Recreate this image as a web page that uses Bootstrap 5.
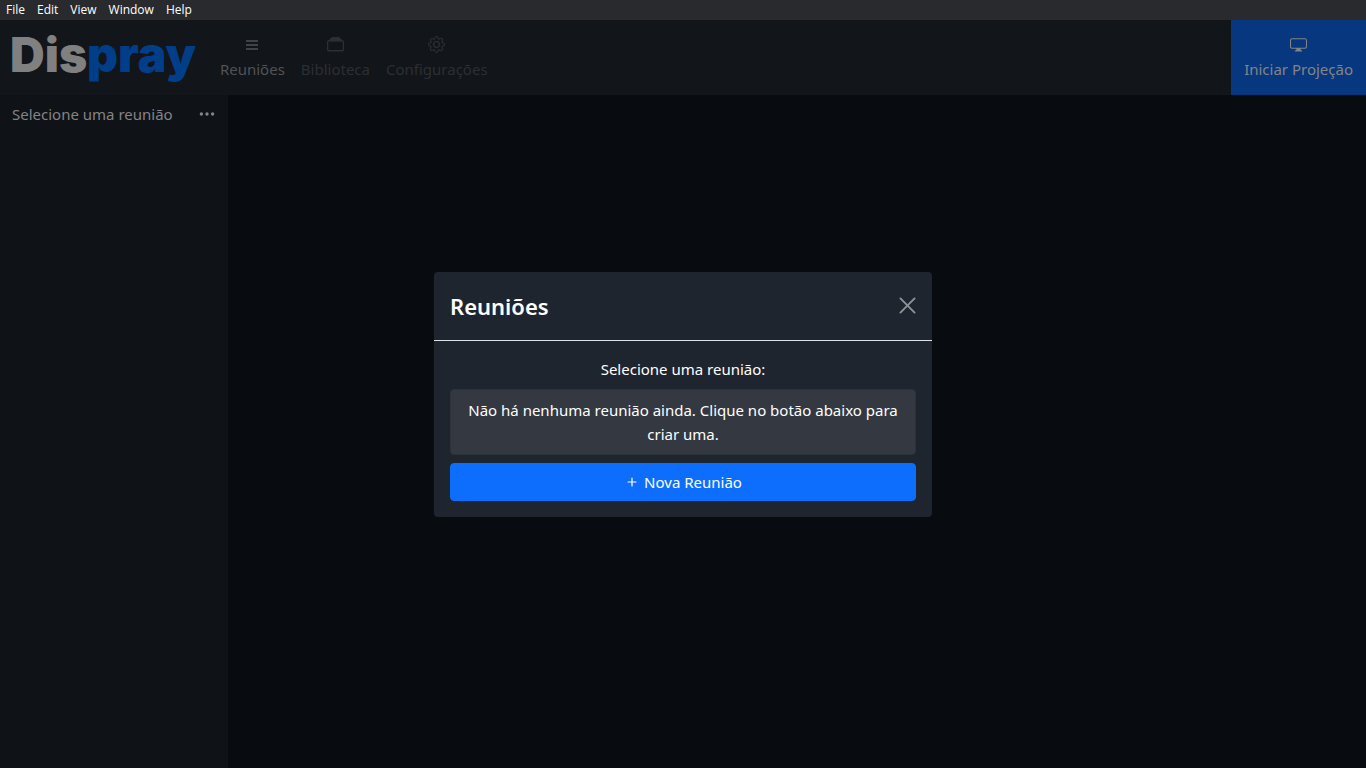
<!DOCTYPE html>
<html lang="pt-BR" data-bs-theme="dark">
<head>
<meta charset="utf-8">
<meta name="viewport" content="width=device-width, initial-scale=1">
<title>Dispray</title>
<link href="https://cdn.jsdelivr.net/npm/bootstrap@5.3.0/dist/css/bootstrap.min.css" rel="stylesheet">
<style>
  body { font-family: "Noto Sans", "Open Sans", sans-serif; font-size: 15px; line-height: 24px; background: #080b10; color: #fff; }
  .btn { font-size: 15px; line-height: 24px; }
  .menu-bar { height: 20px; background: #292a2d; font-family: "Open Sans", sans-serif; font-size: 12px; line-height: 20px; }
  .menu-bar a { color: #fff; padding: 0 6px; }
  .top-bar { height: 75px; background: #121519; }
  .brand { font-family: Inter, sans-serif; font-weight: 900; font-size: 48px; line-height: 70px; color: #808080; margin: 0 16px 0 10px; }
  .brand span { color: #003e89; }
  .nav-item-link { color: #2c2f33; padding: 0 8px; }
  .nav-item-link.active { color: #505356; }
  .top-bar nav { padding-bottom: 2px; }
  .icon-row { display: flex; height: 24px; align-items: center; justify-content: center; }
  .start-btn { background: #07377f; color: #838486; padding: 0 13px 2px; border: 0; }
  .side-panel { background: #0f1216; color: #838486; }
  .side-head { padding: 7px 12px; }
  .dots-btn { color: #838486; border: 0; line-height: 0; }
  .dialog-box { background: #1f252e; background-clip: padding-box; border: 1px solid transparent; border-radius: 5px; }
  .dialog-head { border-bottom: 1px solid #dee2e6; padding: 16px; }
  .dialog-title { font-size: 22px; font-weight: 600; line-height: 36px; }
  .empty-note { background: #333841; border: 1px solid #2d323a; border-radius: 4px; padding: 8px 16px; }
  .new-btn { background: #0d6efd; border-color: #0d6efd; color: #fff; border-radius: 4px; }
  .close-btn { color: #8f9297; border: 0; line-height: 0; }
</style>
</head>
<body class="d-flex flex-column vh-100 overflow-hidden">
<nav class="menu-bar d-flex flex-shrink-0" aria-label="Menu">
  <a class="text-decoration-none" href="#">File</a>
  <a class="text-decoration-none" href="#">Edit</a>
  <a class="text-decoration-none" href="#">View</a>
  <a class="text-decoration-none" href="#">Window</a>
  <a class="text-decoration-none" href="#">Help</a>
</nav>
<div class="position-relative flex-grow-1 d-flex flex-column">
  <header class="top-bar d-flex align-items-stretch">
    <a class="brand text-decoration-none" href="#">Dis<span>pray</span></a>
    <nav class="d-flex align-items-center me-auto text-center">
      <a class="nav-item-link active text-decoration-none" href="#">
        <span class="icon-row"><svg width="16" height="16" viewBox="0 0 16 16" fill="none" stroke="currentColor" stroke-width="1.6"><path d="M2 4h12M2 8h12M2 12h12"/></svg></span>
        Reuniões
      </a>
      <a class="nav-item-link text-decoration-none" href="#">
        <span class="icon-row"><svg width="17" height="17" viewBox="0 0 16 16" fill="currentColor"><path d="M3 2.600a.5.5 0 0 1 .4-.5L5 1h6l1.600 1.100L15.500 5H.5z"/><path d="M0 13a1.500 1.500 0 0 0 1.500 1.500h13A1.500 1.500 0 0 0 16 13V5.500A1.500 1.500 0 0 0 14.500 4h-13A1.500 1.500 0 0 0 0 5.500zm1.700.2A.5.5 0 0 1 1.200 12.700V5.700a.5.5 0 0 1 .5-.5h12.600a.5.5 0 0 1 .5.5v7a.5.5 0 0 1-.5.5z"/></svg></span>
        Biblioteca
      </a>
      <a class="nav-item-link text-decoration-none" href="#">
        <span class="icon-row"><svg width="17" height="17" viewBox="0 0 16 16" fill="currentColor" stroke="currentColor" stroke-width=".2"><path d="M8 4.754a3.246 3.246 0 1 0 0 6.492 3.246 3.246 0 0 0 0-6.492zM5.754 8a2.246 2.246 0 1 1 4.492 0 2.246 2.246 0 0 1-4.492 0z"/><path d="M9.796 1.343c-.527-1.790-3.065-1.790-3.592 0l-.094.319a.873.873 0 0 1-1.255.52l-.292-.160c-1.640-.892-3.433.902-2.540 2.541l.159.292a.873.873 0 0 1-.52 1.255l-.319.094c-1.790.527-1.790 3.065 0 3.592l.319.094a.873.873 0 0 1 .52 1.255l-.160.292c-.892 1.640.901 3.434 2.541 2.540l.292-.159a.873.873 0 0 1 1.255.52l.094.319c.527 1.790 3.065 1.790 3.592 0l.094-.319a.873.873 0 0 1 1.255-.52l.292.160c1.640.893 3.434-.902 2.540-2.541l-.159-.292a.873.873 0 0 1 .52-1.255l.319-.094c1.790-.527 1.790-3.065 0-3.592l-.319-.094a.873.873 0 0 1-.52-1.255l.160-.292c.893-1.640-.902-3.433-2.541-2.540l-.292.159a.873.873 0 0 1-1.255-.52l-.094-.319zm-2.633.283c.246-.835 1.428-.835 1.674 0l.094.319a1.873 1.873 0 0 0 2.693 1.115l.291-.160c.764-.415 1.600.420 1.184 1.185l-.159.292a1.873 1.873 0 0 0 1.116 2.692l.318.094c.835.246.835 1.428 0 1.674l-.319.094a1.873 1.873 0 0 0-1.115 2.693l.160.291c.415.764-.420 1.600-1.185 1.184l-.291-.159a1.873 1.873 0 0 0-2.693 1.116l-.094.318c-.246.835-1.428.835-1.674 0l-.094-.319a1.873 1.873 0 0 0-2.692-1.115l-.292.160c-.764.415-1.600-.420-1.184-1.185l.159-.291A1.873 1.873 0 0 0 1.945 8.930l-.319-.094c-.835-.246-.835-1.428 0-1.674l.319-.094A1.873 1.873 0 0 0 3.060 4.377l-.160-.292c-.415-.764.420-1.600 1.185-1.184l.292.159a1.873 1.873 0 0 0 2.692-1.115l.094-.319z"/></svg></span>
        Configurações
      </a>
    </nav>
    <button type="button" class="btn start-btn rounded-0">
      <span class="icon-row"><svg width="17" height="17" viewBox="0 0 16 16" fill="currentColor"><path d="M0 4s0-2 2-2h12s2 0 2 2v6s0 2-2 2h-4c0 .667.083 1.167.25 1.500H11a.5.5 0 0 1 0 1H5a.5.5 0 0 1 0-1h.75c.167-.333.25-.833.25-1.500H2s-2 0-2-2V4zm1.398-.855a.758.758 0 0 0-.254.302A1.460 1.460 0 0 0 1 4.010V10c0 .325.078.502.145.602.070.105.170.188.302.254a1.464 1.464 0 0 0 .538.143L2.010 11H14c.325 0 .502-.078.602-.145a.758.758 0 0 0 .254-.302 1.464 1.464 0 0 0 .143-.538L15 9.990V4c0-.325-.078-.502-.145-.602a.757.757 0 0 0-.302-.254A1.460 1.460 0 0 0 13.990 3H2c-.325 0-.502.078-.602.145z"/></svg></span>
      Iniciar Projeção
    </button>
  </header>
  <div class="row g-0 flex-grow-1">
    <aside class="side-panel col-2">
      <div class="side-head d-flex align-items-center justify-content-between">
        <span>Selecione uma reunião</span>
        <button type="button" class="dots-btn bg-transparent p-0" aria-label="Mais opções"><svg width="18" height="18" viewBox="0 0 16 16" fill="currentColor"><path d="M3 9.500a1.500 1.500 0 1 1 0-3 1.500 1.500 0 0 1 0 3zm5 0a1.500 1.500 0 1 1 0-3 1.500 1.500 0 0 1 0 3zm5 0a1.500 1.500 0 1 1 0-3 1.500 1.500 0 0 1 0 3z"/></svg></button>
      </div>
    </aside>
    <main class="col-10"></main>
  </div>
  <div class="modal d-block position-absolute" role="dialog" aria-labelledby="dialogTitle">
    <div class="modal-dialog modal-dialog-centered my-0 h-100">
      <div class="modal-content dialog-box">
        <div class="dialog-head d-flex align-items-center justify-content-between">
          <h1 class="dialog-title mb-0" id="dialogTitle">Reuniões</h1>
          <button type="button" class="close-btn bg-transparent p-0" aria-label="Fechar"><svg width="17" height="17" viewBox="0 0 18 18" fill="none" stroke="currentColor" stroke-width="2" stroke-linecap="round"><path d="M1.500 1.500l15 15M16.500 1.500l-15 15"/></svg></button>
        </div>
        <div class="modal-body text-center">
          <p class="mb-2">Selecione uma reunião:</p>
          <div class="empty-note mb-2">Não há nenhuma reunião ainda. Clique no botão abaixo para criar uma.</div>
          <button type="button" class="btn new-btn w-100 d-flex align-items-center justify-content-center gap-1"><svg width="16" height="16" viewBox="0 0 16 16" fill="none" stroke="currentColor" stroke-width="1.2" stroke-linecap="round"><path d="M8 4v8M4 8h8"/></svg>Nova Reunião</button>
        </div>
      </div>
    </div>
  </div>
</div>
<script src="https://cdn.jsdelivr.net/npm/bootstrap@5.3.0/dist/js/bootstrap.bundle.min.js"></script>
</body>
</html>
